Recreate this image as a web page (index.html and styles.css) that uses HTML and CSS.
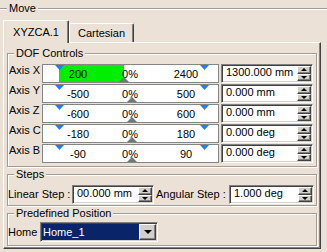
FILE: index.html
```html
<!DOCTYPE html>
<html lang="en">
<head>
  <meta charset="UTF-8" />
  <title>Move</title>
  <link rel="stylesheet" href="styles.css">
</head>
<body>

  <fieldset class="move">
    <legend>Move</legend>

    <div class="tab-widget">
      <div class="tabs">
        <div class="tab active">XYZCA.1</div>
        <div class="tab">Cartesian</div>
      </div>

      <div class="tab-panel">

        <fieldset class="group dof">
          <legend>DOF Controls</legend>

          <div class="axis-row">
            <span class="axis-label">Axis X</span>
            <div class="slider">
              <div class="fill" style="width: 65px"></div>
              <div class="slider-vals"><span>200</span><span>0%</span><span>2400</span></div>
              <span class="mark mark-min"></span>
              <span class="mark mark-max"></span>
              <span class="cursor" style="left: 76px"></span>
            </div>
            <div class="spin">
              <span class="spin-val">1300.000 mm</span>
              <span class="spin-btns"><span class="spin-btn up"></span><span class="spin-btn down"></span></span>
            </div>
          </div>

          <div class="axis-row">
            <span class="axis-label">Axis Y</span>
            <div class="slider">
              <div class="slider-vals"><span>-500</span><span>0%</span><span>500</span></div>
              <span class="mark mark-min"></span>
              <span class="mark mark-max"></span>
              <span class="cursor" style="left: 84px"></span>
            </div>
            <div class="spin">
              <span class="spin-val">0.000 mm</span>
              <span class="spin-btns"><span class="spin-btn up"></span><span class="spin-btn down"></span></span>
            </div>
          </div>

          <div class="axis-row">
            <span class="axis-label">Axis Z</span>
            <div class="slider">
              <div class="slider-vals"><span>-600</span><span>0%</span><span>600</span></div>
              <span class="mark mark-min"></span>
              <span class="mark mark-max"></span>
              <span class="cursor" style="left: 84px"></span>
            </div>
            <div class="spin">
              <span class="spin-val">0.000 mm</span>
              <span class="spin-btns"><span class="spin-btn up"></span><span class="spin-btn down"></span></span>
            </div>
          </div>

          <div class="axis-row">
            <span class="axis-label">Axis C</span>
            <div class="slider">
              <div class="slider-vals"><span>-180</span><span>0%</span><span>180</span></div>
              <span class="mark mark-min"></span>
              <span class="mark mark-max"></span>
              <span class="cursor" style="left: 84px"></span>
            </div>
            <div class="spin">
              <span class="spin-val">0.000 deg</span>
              <span class="spin-btns"><span class="spin-btn up"></span><span class="spin-btn down"></span></span>
            </div>
          </div>

          <div class="axis-row">
            <span class="axis-label">Axis B</span>
            <div class="slider">
              <div class="slider-vals"><span>-90</span><span>0%</span><span>90</span></div>
              <span class="mark mark-min"></span>
              <span class="mark mark-max"></span>
              <span class="cursor" style="left: 84px"></span>
            </div>
            <div class="spin">
              <span class="spin-val">0.000 deg</span>
              <span class="spin-btns"><span class="spin-btn up"></span><span class="spin-btn down"></span></span>
            </div>
          </div>
        </fieldset>

        <fieldset class="group steps">
          <legend>Steps</legend>
          <div class="step-row">
            <span class="step-label linear">Linear Step :</span>
            <div class="spin linear">
              <span class="spin-val">00.000 mm</span>
              <span class="spin-btns"><span class="spin-btn up"></span><span class="spin-btn down"></span></span>
            </div>
            <span class="step-label angular">Angular Step :</span>
            <div class="spin angular">
              <span class="spin-val">1.000 deg</span>
              <span class="spin-btns"><span class="spin-btn up"></span><span class="spin-btn down"></span></span>
            </div>
          </div>
        </fieldset>

        <fieldset class="group predef">
          <legend>Predefined Position</legend>
          <div class="home-row">
            <span class="home-label">Home</span>
            <div class="combo">
              <span class="combo-sel">Home_1</span>
              <span class="combo-btn"></span>
            </div>
          </div>
        </fieldset>

      </div>
    </div>
  </fieldset>

</body>
</html>
```

FILE: styles.css
```css
html, body {
  margin: 0;
  overflow: hidden;
}

body {
  width: 327px;
  height: 252px;
  background: #ebe1d7;
  font-family: 'Liberation Sans', Arial, sans-serif;
  font-size: 11px;
  line-height: 13px;
  color: #000;
}

/* etched group boxes */
fieldset {
  margin: 0;
  padding: 0;
  min-width: 0;
  border: 1px solid #a39b93;
  box-shadow: inset 1px 1px 0 #fff, 1px 1px 0 #fff;
}

legend {
  padding: 0 2px;
  background: #ebe1d7;
  line-height: 13px;
}

.move {
  margin-top: 2px;
  border-width: 1px 0 0 0;
  box-shadow: inset 0 1px 0 #fff;
}

.move legend {
  margin-left: 7px;
}

.group legend {
  margin-left: 6px;
}

/* tabs */
.tab-widget {
  margin: 5px 0 0 3px;
  width: 318px;
}

.tabs {
  display: flex;
  align-items: flex-end;
  height: 22px;
}

.tab {
  box-sizing: border-box;
  width: 65px;
  height: 19px;
  border: 1px solid;
  border-color: #fff #404040 transparent #fff;
  border-bottom: 0;
  border-radius: 2px 2px 0 0;
  box-shadow: inset -1px 0 0 #808080;
  display: flex;
  align-items: center;
  justify-content: center;
}

.tab.active {
  width: 66px;
  height: 23px;
  margin-bottom: -1px;
  position: relative;
  z-index: 1;
  background: #ebe1d7;
}

.tab-panel {
  border: 1px solid;
  border-color: #fff #404040 #404040 #fff;
  box-shadow: inset -1px -1px 0 #808080;
  padding: 0 3px 2px 3px;
}

/* DOF controls */
.dof {
  margin-top: 4px;
  padding: 4px 0 3px;
}

.axis-row {
  display: flex;
  height: 19px;
}

.axis-row + .axis-row {
  margin-top: 1px;
}

.axis-label {
  width: 34px;
  padding-left: 1px;
  box-sizing: border-box;
}

.slider {
  box-sizing: border-box;
  width: 177px;
  height: 19px;
  margin-right: 2px;
  border: 1px solid #858585;
  background: #fff;
  position: relative;
}

.fill {
  position: absolute;
  top: 0;
  bottom: 0;
  left: 16px;
  background: #00ee00;
}

.slider-vals {
  position: relative;
  display: grid;
  grid-template-columns: 30px 74px 38px;
  padding: 3px 0 0 20px;
  text-align: center;
}

.mark {
  position: absolute;
  top: 0;
  width: 9px;
  height: 5px;
  background: #1f7dff;
  clip-path: polygon(0 0, 100% 0, 50% 100%);
}

.mark-min { left: 12px; }
.mark-max { left: 157px; }

.cursor {
  position: absolute;
  bottom: 0;
  width: 10px;
  height: 5px;
  background: #6d7a79;
  clip-path: polygon(50% 0, 100% 100%, 0 100%);
}

/* spin boxes */
.spin {
  box-sizing: border-box;
  width: 92px;
  height: 19px;
  display: flex;
  border: 1px solid;
  border-color: #808080 #fff #fff #808080;
  box-shadow: inset 1px 1px 0 #404040, inset -1px -1px 0 #d4d0c8;
  background: #fff;
  padding: 1px;
}

.spin-val {
  flex: 1;
  padding-left: 3px;
  white-space: nowrap;
}

.spin-btns {
  width: 14px;
  display: flex;
  flex-direction: column;
}

.spin-btn {
  flex: 1;
  box-sizing: border-box;
  background: #d4d0c8;
  border: 1px solid;
  border-color: #fff #404040 #404040 #fff;
  box-shadow: inset -1px -1px 0 #808080;
  display: flex;
  align-items: center;
  justify-content: center;
}

.spin-btn::before {
  content: "";
  border-left: 3px solid transparent;
  border-right: 3px solid transparent;
}

.spin-btn.up::before {
  border-bottom: 3px solid #000;
}

.spin-btn.down::before {
  border-top: 3px solid #000;
}

/* steps */
.steps {
  margin-top: 1px;
  padding: 4px 0 1px;
}

.step-row {
  display: flex;
  align-items: center;
  height: 19px;
}

.step-label {
  white-space: nowrap;
}

.step-label.linear { width: 64px; }
.step-label.angular { width: 73px; margin-left: 2px; }

.spin.linear { width: 82px; }
.spin.angular { width: 85px; }

/* predefined position */
.predef {
  margin-top: 1px;
  padding: 2px 0 3px;
}

.home-row {
  display: flex;
  align-items: center;
  height: 20px;
}

.home-label {
  width: 32px;
}

.combo {
  box-sizing: border-box;
  width: 118px;
  height: 20px;
  display: flex;
  border: 1px solid;
  border-color: #808080 #fff #fff #808080;
  box-shadow: inset 1px 1px 0 #404040, inset -1px -1px 0 #d4d0c8;
  background: #fff;
  padding: 1px;
}

.combo-sel {
  flex: 1;
  background: #0a246a;
  color: #fff;
  padding-left: 1px;
  display: flex;
  align-items: center;
}

.combo-btn {
  box-sizing: border-box;
  width: 17px;
  background: #d4d0c8;
  border: 1px solid;
  border-color: #fff #404040 #404040 #fff;
  box-shadow: inset -1px -1px 0 #808080;
  display: flex;
  align-items: center;
  justify-content: center;
}

.combo-btn::before {
  content: "";
  border-left: 4px solid transparent;
  border-right: 4px solid transparent;
  border-top: 4px solid #000;
}
```
